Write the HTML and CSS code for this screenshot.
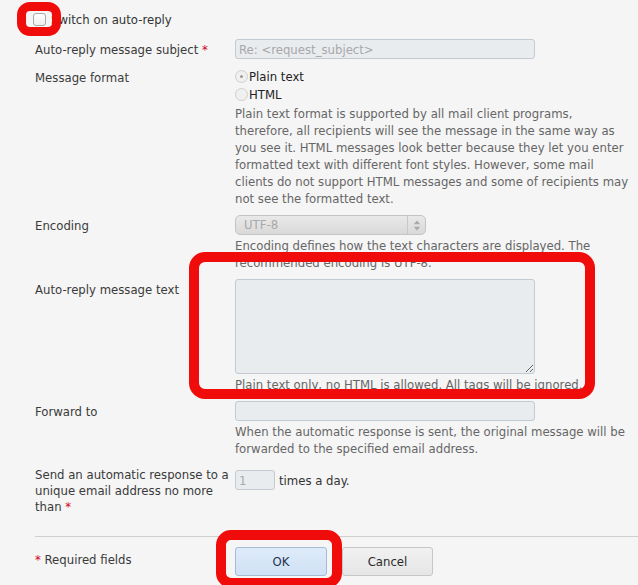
FILE: index.html
```html
<!DOCTYPE html>
<html lang="en">
<head>
<meta charset="utf-8">
<title>Auto-reply settings</title>
<link rel="stylesheet" href="styles.css">
</head>
<body>
<div class="page">
  <label class="switch">
    <input type="checkbox" class="cb">
    <span>Switch on auto-reply</span>
  </label>

  <div class="row">
    <div class="label">Auto-reply message subject <span class="req">*</span></div>
    <div class="field"><input type="text" class="text" value="Re: &lt;request_subject&gt;" disabled></div>
  </div>

  <div class="row">
    <div class="label">Message format</div>
    <div class="field">
      <label class="radio-line"><span class="radio checked"></span>Plain text</label>
      <label class="radio-line"><span class="radio"></span>HTML</label>
      <p class="hint">Plain text format is supported by all mail client programs, therefore, all recipients will see the message in the same way as you see it. HTML messages look better because they let you enter formatted text with different font styles. However, some mail clients do not support HTML messages and some of recipients may not see the formatted text.</p>
    </div>
  </div>

  <div class="row">
    <div class="label">Encoding</div>
    <div class="field">
      <div class="select">
        <span class="select-value">UTF-8</span>
        <span class="select-arrows">
          <svg width="8" height="11" viewBox="0 0 8 11"><path d="M4 0.5 L7.2 4.2 L0.8 4.2 Z M4 10.5 L7.2 6.8 L0.8 6.8 Z" fill="#a9a9a9"/></svg>
        </span>
      </div>
      <p class="hint">Encoding defines how the text characters are displayed. The recommended encoding is UTF-8.</p>
    </div>
  </div>

  <div class="row">
    <div class="label">Auto-reply message text</div>
    <div class="field">
      <textarea class="area" disabled></textarea>
      <p class="hint">Plain text only, no HTML is allowed. All tags will be ignored.</p>
    </div>
  </div>

  <div class="row">
    <div class="label">Forward to</div>
    <div class="field">
      <input type="text" class="text" disabled>
      <p class="hint">When the automatic response is sent, the original message will be forwarded to the specified email address.</p>
    </div>
  </div>

  <div class="row">
    <div class="label label-multi">Send an automatic response to a unique email address no more than <span class="req">*</span></div>
    <div class="field times">
      <input type="text" class="text small" value="1" disabled>
      <span>times a day.</span>
    </div>
  </div>

  <div class="footer">
    <div class="label required"><span class="req">*</span> Required fields</div>
    <div class="buttons">
      <button class="btn btn-ok">OK</button>
      <button class="btn btn-cancel">Cancel</button>
    </div>
  </div>

  <div class="mark mark-cb"></div>
  <div class="mark mark-text"></div>
  <div class="mark mark-ok"></div>
</div>
</body>
</html>
```

FILE: styles.css
```css
html, body {
  margin: 0;
  padding: 0;
  background: #f5f5f5;
}

body {
  font-family: "DejaVu Sans Condensed", "DejaVu Sans", sans-serif;
  font-stretch: condensed;
  font-size: 13px;
  line-height: 17px;
  color: #3a3a3a;
  overflow: hidden;
}

.page {
  position: relative;
  height: 585px;
  padding: 11px 0 0 35px;
  box-sizing: border-box;
}

.switch {
  display: flex;
  align-items: center;
  height: 17px;
  margin-left: -2px;
  color: #333;
}

.cb {
  appearance: none;
  -webkit-appearance: none;
  width: 13px;
  height: 13px;
  margin: 0 5px 0 0;
  border: 1px solid #a8a8a8;
  border-radius: 3px;
  background: linear-gradient(#ffffff, #eeeeee);
  box-sizing: border-box;
}

.row {
  display: grid;
  grid-template-columns: 200px 396px;
  margin-top: 8px;
}

.row:first-of-type {
  margin-top: 11px;
}

.label {
  padding: 2px 10px 0 0;
  color: #3a3a3a;
}

.label-multi {
  line-height: 16px;
  padding-right: 3px;
}

.req {
  color: #d0021b;
}

.field {
  min-width: 0;
}

.text {
  display: block;
  width: 300px;
  height: 20px;
  margin: 0;
  padding: 0 3px;
  border: 1px solid #c3cad1;
  border-radius: 3px;
  background: #e9ecef;
  font: inherit;
  color: #a8a8a8;
  box-sizing: border-box;
}

.radio-line {
  display: flex;
  align-items: center;
  height: 18px;
  color: #222;
}

.radio {
  width: 13px;
  height: 13px;
  border: 1px solid #cfcfcf;
  border-radius: 50%;
  background: #f0f0f0;
  box-sizing: border-box;
  position: relative;
  margin-right: 1px;
}

.radio.checked::after {
  content: "";
  position: absolute;
  left: 4px;
  top: 4px;
  width: 3px;
  height: 3px;
  border-radius: 50%;
  background: #9a9a9a;
}

.hint {
  margin: 2px 0 0;
  color: #666;
}

.select {
  display: flex;
  width: 191px;
  height: 20px;
  border: 1px solid #c4c4c4;
  border-radius: 5px;
  background: linear-gradient(#e9e9e9, #d9d9d9);
  box-sizing: border-box;
  color: #a8a8a8;
  line-height: 18px;
}

.select-value {
  flex: 1;
  padding-left: 8px;
}

.select-arrows {
  width: 17px;
  border-left: 1px solid #c8c8c8;
  display: flex;
  align-items: center;
  justify-content: center;
}

.area {
  display: block;
  width: 300px;
  height: 95px;
  margin: 0;
  border: 1px solid #c3cad1;
  border-radius: 3px;
  background: #e9ecef;
  box-sizing: border-box;
  resize: both;
}

.times {
  display: flex;
  align-items: center;
  align-self: start;
  margin-top: 5px;
  color: #333;
}

.text.small {
  width: 40px;
  margin-right: 4px;
}

.footer {
  display: grid;
  grid-template-columns: 200px auto;
  margin-top: 21px;
  border-top: 1px solid #cfcfcf;
  padding-top: 10px;
}

.required {
  padding-top: 4px;
}

.buttons {
  display: flex;
  gap: 15px;
}

.btn {
  height: 29px;
  margin: 0;
  border-radius: 3px;
  font: inherit;
  color: #2a2a2a;
  box-sizing: border-box;
  padding: 0;
}

.btn-ok {
  width: 92px;
  border: 1px solid #a6bcd6;
  background: linear-gradient(#deebf9, #cfe1f5);
  color: #1f3550;
}

.btn-cancel {
  width: 91px;
  border: 1px solid #c6c6c6;
  background: linear-gradient(#f1f1f1, #e6e6e6);
}

.mark {
  position: absolute;
  border: 10px solid #f10c0c;
  box-sizing: border-box;
  pointer-events: none;
}

.mark-cb {
  left: 17px;
  top: 2px;
  width: 44px;
  height: 34px;
  border-width: 9px;
  border-radius: 13px;
}

.mark-text {
  left: 189px;
  top: 252px;
  width: 406px;
  height: 147px;
  border-radius: 16px;
}

.mark-ok {
  left: 216px;
  top: 530px;
  width: 126px;
  height: 58px;
  border-radius: 15px;
}
```
